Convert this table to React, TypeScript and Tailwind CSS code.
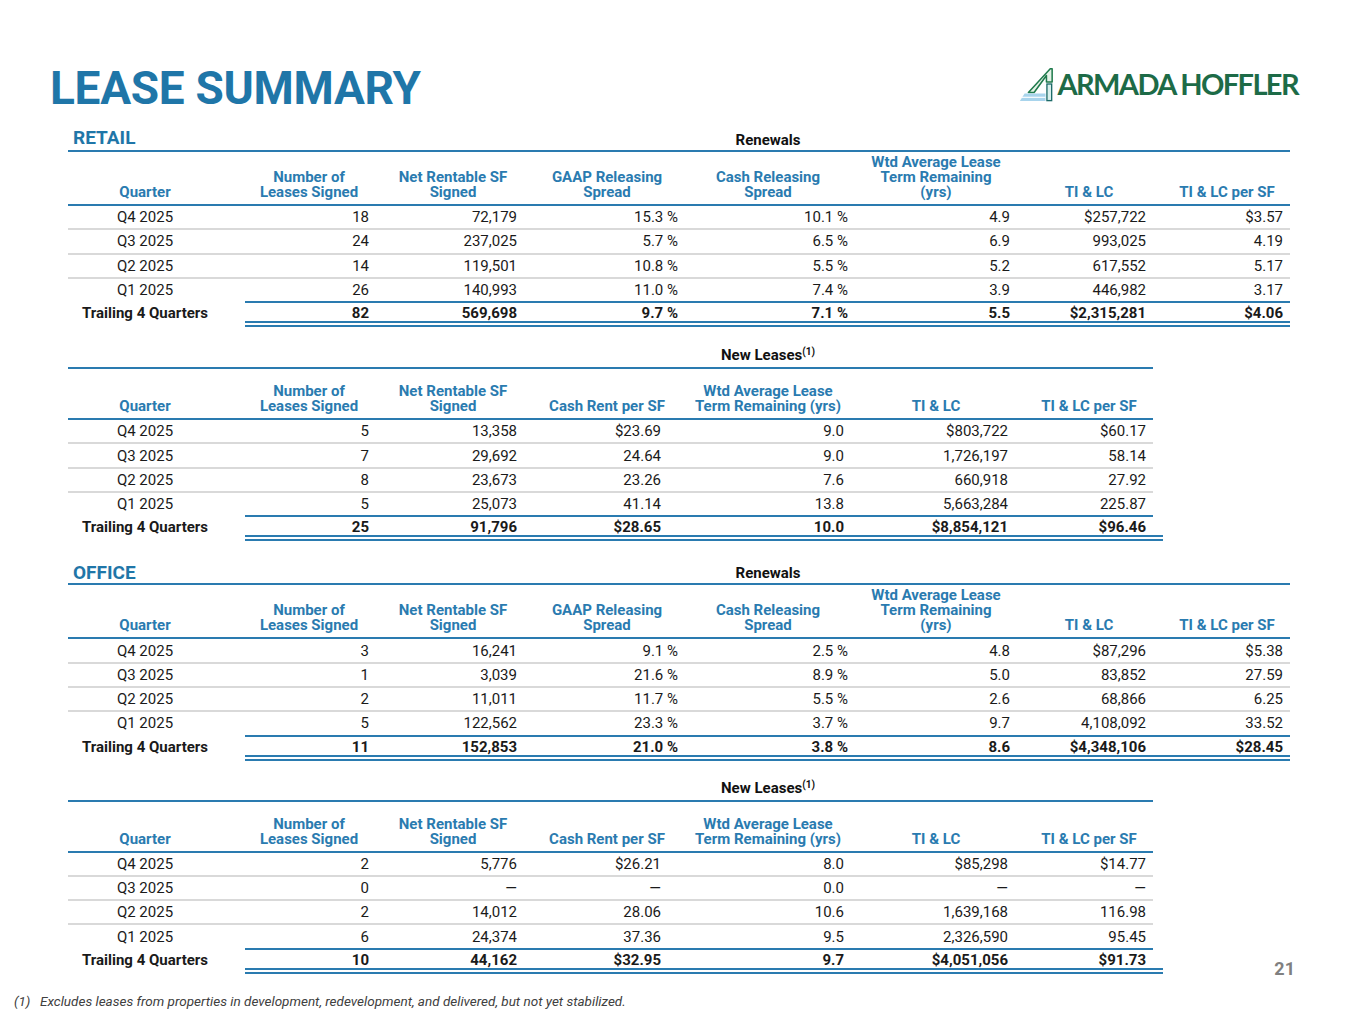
import React from 'react';

// Lease summary slide

type Col = { head: React.ReactNode; hcls?: string; dcls: string };

const BLUE = 'text-[#2a7bb0]';

const RENEWAL_GRID = 'grid w-[1222px] grid-cols-[177px_128px_160px_148px_174px_162px_144px_129px]';
const NEW_GRID = 'grid w-[1085px] grid-cols-[177px_128px_160px_148px_174px_162px_136px]';

const renewalCols: Col[] = [
  { head: 'Quarter', hcls: 'pr-[23px]', dcls: 'justify-center pr-[23px]' },
  { head: <>Number of<br />Leases Signed</>, dcls: 'justify-end pr-[4px]' },
  { head: <>Net Rentable SF<br />Signed</>, dcls: 'justify-end pr-[16px]' },
  { head: <>GAAP Releasing<br />Spread</>, dcls: 'justify-end pr-[3px]' },
  { head: <>Cash Releasing<br />Spread</>, dcls: 'justify-end pr-[7px]' },
  { head: <>Wtd Average Lease<br />Term Remaining<br />(yrs)</>, dcls: 'justify-end pr-[7px]' },
  { head: 'TI & LC', dcls: 'justify-end pr-[15px]' },
  { head: 'TI & LC per SF', hcls: 'pl-[3px]', dcls: 'justify-end pr-[7px]' },
];

const newCols: Col[] = [
  { head: 'Quarter', hcls: 'pr-[23px]', dcls: 'justify-center pr-[23px]' },
  { head: <>Number of<br />Leases Signed</>, dcls: 'justify-end pr-[4px]' },
  { head: <>Net Rentable SF<br />Signed</>, dcls: 'justify-end pr-[16px]' },
  { head: 'Cash Rent per SF', dcls: 'justify-end pr-[20px]' },
  { head: <>Wtd Average Lease<br />Term Remaining (yrs)</>, dcls: 'justify-end pr-[11px]' },
  { head: 'TI & LC', dcls: 'justify-end pr-[9px]' },
  { head: 'TI & LC per SF', hcls: 'pl-[8px]', dcls: 'justify-end pr-[7px]' },
];

const retailRenewals = {
  rows: [
    ['Q4 2025', '18', '72,179', '15.3 %', '10.1 %', '4.9', '$257,722', '$3.57'],
    ['Q3 2025', '24', '237,025', '5.7 %', '6.5 %', '6.9', '993,025', '4.19'],
    ['Q2 2025', '14', '119,501', '10.8 %', '5.5 %', '5.2', '617,552', '5.17'],
    ['Q1 2025', '26', '140,993', '11.0 %', '7.4 %', '3.9', '446,982', '3.17'],
  ],
  total: ['Trailing 4 Quarters', '82', '569,698', '9.7 %', '7.1 %', '5.5', '$2,315,281', '$4.06'],
};

const retailNew = {
  rows: [
    ['Q4 2025', '5', '13,358', '$23.69', '9.0', '$803,722', '$60.17'],
    ['Q3 2025', '7', '29,692', '24.64', '9.0', '1,726,197', '58.14'],
    ['Q2 2025', '8', '23,673', '23.26', '7.6', '660,918', '27.92'],
    ['Q1 2025', '5', '25,073', '41.14', '13.8', '5,663,284', '225.87'],
  ],
  total: ['Trailing 4 Quarters', '25', '91,796', '$28.65', '10.0', '$8,854,121', '$96.46'],
};

const officeRenewals = {
  rows: [
    ['Q4 2025', '3', '16,241', '9.1 %', '2.5 %', '4.8', '$87,296', '$5.38'],
    ['Q3 2025', '1', '3,039', '21.6 %', '8.9 %', '5.0', '83,852', '27.59'],
    ['Q2 2025', '2', '11,011', '11.7 %', '5.5 %', '2.6', '68,866', '6.25'],
    ['Q1 2025', '5', '122,562', '23.3 %', '3.7 %', '9.7', '4,108,092', '33.52'],
  ],
  total: ['Trailing 4 Quarters', '11', '152,853', '21.0 %', '3.8 %', '8.6', '$4,348,106', '$28.45'],
};

const officeNew = {
  rows: [
    ['Q4 2025', '2', '5,776', '$26.21', '8.0', '$85,298', '$14.77'],
    ['Q3 2025', '0', '—', '—', '0.0', '—', '—'],
    ['Q2 2025', '2', '14,012', '28.06', '10.6', '1,639,168', '116.98'],
    ['Q1 2025', '6', '24,374', '37.36', '9.5', '2,326,590', '95.45'],
  ],
  total: ['Trailing 4 Quarters', '10', '44,162', '$32.95', '9.7', '$4,051,056', '$91.73'],
};

interface TableProps {
  grid: string;
  cols: Col[];
  data: { rows: string[][]; total: string[] };
  label?: string;
  labelPb?: string;
  title: React.ReactNode;
  titleH: string;
  headH: string;
  wide?: boolean;
}

const LeaseTable: React.FC<TableProps> = ({ grid, cols, data, label, labelPb = 'pb-[2px]', title, titleH, headH, wide }) => {
  return (
    <div className="text-[15px] leading-[16px] text-[#1a1a1a]">
      {/* title row */}
      <div className={`${grid} ${titleH} items-end border-b-2 border-[#2a7bb0]`}>
        <div className={`col-start-1 pl-[5px] ${labelPb} text-[19px] leading-[20px] font-bold text-[#1f76a8]`}>
          {label}
        </div>
        <div className="col-start-5 pb-[2px] text-center font-bold text-[#111]">{title}</div>
      </div>

      {/* column headers */}
      <div className={`${grid} ${headH} items-end border-b-2 border-[#2a7bb0]`}>
        {cols.map((c, i) => (
          <div key={i} className={`pb-[4px] text-center font-bold leading-[15px] ${BLUE} ${c.hcls ?? ''}`}>
            {c.head}
          </div>
        ))}
      </div>

      {/* data rows */}
      {data.rows.map((row, r) => (
        <div
          key={r}
          className={`${grid} ${r < 3 ? 'h-[24.3px] border-b-2 border-[#d9d9d9]' : 'h-[22.3px]'}`}
        >
          {row.map((v, i) => (
            <div key={i} className={`flex items-center ${cols[i].dcls}`}>
              {v}
            </div>
          ))}
        </div>
      ))}

      {/* total row */}
      <div className={`${grid} h-[20px] font-bold`}>
        {data.total.map((v, i) => (
          <div
            key={i}
            className={`flex items-center ${cols[i].dcls} ${i === 0 ? 'pt-[4px]' : 'pt-[2px] border-t-2 border-[#2a7bb0]'}`}
          >
            {v}
          </div>
        ))}
      </div>
      <div className={grid}>
        <div className={`col-[2/-1] h-[6px] border-y-2 border-[#2a7bb0] ${wide ? '-mr-[10px]' : ''}`} />
      </div>
    </div>
  );
};

const NewLeasesTitle = () => (
  <span>
    New Leases<span className="relative -top-[5px] text-[10px]">(1)</span>
  </span>
);

const Logo = () => (
  <div className="flex items-center gap-[2px]">
    <svg width="38" height="38" viewBox="0 0 40 40">
      <polygon points="12,29 35,4 37,4 37,18 31,18 31,11 18,29" fill="#e4f2e7" stroke="#1f7a4c" strokeWidth="1.6" strokeLinejoin="round" />
      <polygon points="3,38 8,30 30,30 30,38" fill="#a8d4ec" />
      <line x1="5" y1="34" x2="30" y2="34" stroke="#ffffff" strokeWidth="1.2" />
      <rect x="31.5" y="20" width="5" height="17.5" fill="#d8efec" stroke="#1c6a68" strokeWidth="1.4" />
    </svg>
    <div className="[font-family:Lato,sans-serif] text-[29px] leading-[30px] font-bold tracking-[-1.6px] text-[#1d6b47]">
      ARMADA HOFFLER
    </div>
  </div>
);

export default function App() {
  return (
    <div className="w-[1365px] h-[1024px] overflow-hidden bg-white [font-family:Roboto,sans-serif]">
      {/* heading */}
      <div className="flex justify-between items-start pt-[64px] pr-[67px]">
        <h1 className="h-[48px] pl-[50px] text-[46px] leading-[48px] font-bold tracking-[-0.3px] text-[#1f76a8]">
          LEASE SUMMARY
        </h1>
        <div className="mt-[1px]">
          <Logo />
        </div>
      </div>

      <div className="pl-[68px]">
        <LeaseTable
          grid={RENEWAL_GRID}
          cols={renewalCols}
          data={retailRenewals}
          label="RETAIL"
          title="Renewals"
          titleH="h-[40px]"
          headH="h-[54px]"
        />
        <LeaseTable
          grid={NEW_GRID}
          cols={newCols}
          data={retailNew}
          title={<NewLeasesTitle />}
          titleH="h-[42px]"
          headH="h-[51px]"
          wide
        />
        <LeaseTable
          grid={RENEWAL_GRID}
          cols={renewalCols}
          data={officeRenewals}
          label="OFFICE"
          labelPb="pb-0"
          title="Renewals"
          titleH="h-[44px]"
          headH="h-[54px]"
        />
        <div className="flex items-end">
          <LeaseTable
            grid={NEW_GRID}
            cols={newCols}
            data={officeNew}
            title={<NewLeasesTitle />}
            titleH="h-[41px]"
            headH="h-[51px]"
            wide
          />
          <div className="ml-auto pr-[70px] -mb-[5px] text-[18px] leading-[20px] font-bold text-[#808080]">21</div>
        </div>
      </div>

      {/* footnote */}
      <div className="mt-[20px] pl-[14px] text-[13.5px] leading-[14px] italic text-[#404040]">
        <span className="inline-block w-[26px]">(1)</span>
        Excludes leases from properties in development, redevelopment, and delivered, but not yet stabilized.
      </div>
    </div>
  );
}
